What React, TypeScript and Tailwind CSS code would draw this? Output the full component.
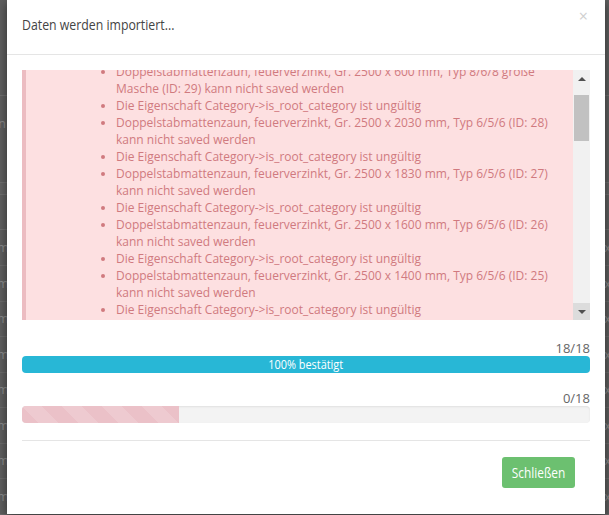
import { useMemo } from 'react';

const items: string[][] = [
  ['Doppelstabmattenzaun, feuerverzinkt, Gr. 2500 x 600 mm, Typ 8/6/8 große', 'Masche (ID: 29) kann nicht saved werden'],
  ['Die Eigenschaft Category->is_root_category ist ungültig'],
  ['Doppelstabmattenzaun, feuerverzinkt, Gr. 2500 x 2030 mm, Typ 6/5/6 (ID: 28)', 'kann nicht saved werden'],
  ['Die Eigenschaft Category->is_root_category ist ungültig'],
  ['Doppelstabmattenzaun, feuerverzinkt, Gr. 2500 x 1830 mm, Typ 6/5/6 (ID: 27)', 'kann nicht saved werden'],
  ['Die Eigenschaft Category->is_root_category ist ungültig'],
  ['Doppelstabmattenzaun, feuerverzinkt, Gr. 2500 x 1600 mm, Typ 6/5/6 (ID: 26)', 'kann nicht saved werden'],
  ['Die Eigenschaft Category->is_root_category ist ungültig'],
  ['Doppelstabmattenzaun, feuerverzinkt, Gr. 2500 x 1400 mm, Typ 6/5/6 (ID: 25)', 'kann nicht saved werden'],
  ['Die Eigenschaft Category->is_root_category ist ungültig'],
  ['Doppelstabmattenzaun, feuerverzinkt, Gr. 2500 x 1200 mm, Typ 6/5/6 (ID: 24)', 'kann nicht saved werden'],
];

// no condensed face is installed, so the narrow headings are squeezed
const narrow = "inline-block whitespace-nowrap font-['Open_Sans',sans-serif]";

function PageBehind() {
  // the page under the dimmed backdrop, only its edges show
  const rows = useMemo(() => Array.from({ length: 8 }), []);
  return (
    <div className="w-full h-full bg-[#5e5e5e] flex flex-col text-[#8a8a8a] text-[13px] font-['Open_Sans',sans-serif]">
      <div className="h-[97px] border-b border-[#6e6e6e]" />
      <div className="h-[88px] border-b border-[#6e6e6e] flex items-start pt-[18px]">
        <span className="ml-[-2px]">n</span>
      </div>
      <div className="h-[12px] border-b border-[#6e6e6e] bg-[#626262]" />
      <div className="h-[36px] border-b border-[#6e6e6e]" />
      {rows.map((_, i) => (
        <div key={i} className="h-[36px] border-b border-[#6a6a6a] flex items-center justify-between">
          <span className="ml-[-3px]">m</span>
          <span className="mr-[-2px]">x</span>
        </div>
      ))}
    </div>
  );
}

function Scrollbar() {
  return (
    <div className="w-[17px] h-full bg-[#f1f1f1] flex flex-col">
      <div className="h-[17px] flex items-center justify-center">
        <div className="w-0 h-0 border-l-[4px] border-r-[4px] border-b-[4px] border-l-transparent border-r-transparent border-b-[#505050]" />
      </div>
      <div className="h-[8px]" />
      <div className="mx-[1px] h-[46px] bg-[#c1c1c1]" />
      <div className="flex-1" />
      <div className="h-[17px] bg-[#dcdcdc] flex items-center justify-center">
        <div className="w-0 h-0 border-l-[4px] border-r-[4px] border-t-[4px] border-l-transparent border-r-transparent border-t-[#505050]" />
      </div>
    </div>
  );
}

export default function App() {
  return (
    <div className="relative w-[609px] h-[515px] overflow-hidden">
      <PageBehind />

      {/* Modal */}
      <div className="absolute left-[7px] top-0 w-[598px] h-[514px] bg-white shadow-[0_3px_9px_rgba(0,0,0,0.5)] flex flex-col font-['Open_Sans',sans-serif]">
        {/* Header */}
        <div className="h-[55px] shrink-0 border-b border-[#e5e5e5] px-[15px] flex items-center justify-between">
          <h4 className={`${narrow} text-[15px] text-[#444] mt-[-5px] scale-x-[0.82] origin-left`}>Daten werden importiert...</h4>
          <span className="text-[16px] leading-none text-[#cfcfcf] self-start mt-[8px] mr-[2px]">×</span>
        </div>

        {/* Body */}
        <div className="px-[15px] pt-[15px]">
          <div className="h-[250px] flex bg-[#fde0e1] border-l-[4px] border-[#ecbcc1]">
            <div className="flex-1 overflow-hidden">
              <ul className="list-disc mt-[-7px] pl-[90px] text-[12px] leading-[17px] text-[#d07a7f] marker:text-[#d07a7f]">
                {items.map((lines, i) => (
                  <li key={i}>
                    {lines.map((l, j) => (
                      <span key={j} className="block whitespace-nowrap">{l}</span>
                    ))}
                  </li>
                ))}
              </ul>
            </div>
            <Scrollbar />
          </div>

          {/* Progress */}
          <div className="mt-[20px] text-right text-[13px] leading-[16px] text-[#666]">18/18</div>
          <div className="h-[17px] rounded-[4px] bg-[#28b7d6] flex items-center justify-center">
            <span className={`${narrow} text-[13px] leading-[17px] text-white scale-x-[0.84] origin-center`}>100% bestätigt</span>
          </div>

          <div className="mt-[17px] text-right text-[13px] leading-[16px] text-[#666]">0/18</div>
          <div className="h-[17px] rounded-[4px] bg-[#f3f3f3] shadow-[inset_0_1px_2px_rgba(0,0,0,0.08)] flex overflow-hidden">
            <div className="w-[157px] h-full bg-[#ebc1c8] bg-[linear-gradient(45deg,rgba(255,255,255,.15)_25%,transparent_25%,transparent_50%,rgba(255,255,255,.15)_50%,rgba(255,255,255,.15)_75%,transparent_75%,transparent)] bg-[length:40px_40px]" />
          </div>

          <div className="mt-[17px] border-t border-[#e5e5e5]" />
        </div>

        {/* Footer */}
        <div className="px-[15px] pt-[16px] flex justify-end pr-[30px]">
          <button className="w-[73px] h-[31px] rounded-[3px] bg-[#6cc070] text-white text-[14px] flex items-center justify-center">
            <span className={`${narrow} scale-x-[0.85] origin-center`}>Schließen</span>
          </button>
        </div>
      </div>
    </div>
  );
}
